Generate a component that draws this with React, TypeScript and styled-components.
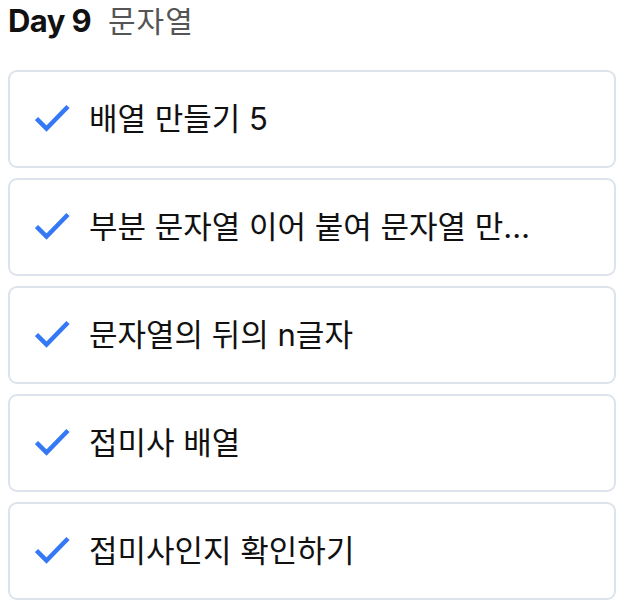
import React from "react";
import styled, { createGlobalStyle } from "styled-components";

const Global = createGlobalStyle`
  body {
    margin: 8px;
    background: #ffffff;
    font-family: Inter, "Noto Sans CJK KR", sans-serif;
    color: #111111;
  }
`;

const Page = styled.div`
  display: flex;
  flex-direction: column;
  width: 608px;
`;

const Header = styled.h1`
  margin: -7px 0 31px 0;
  display: flex;
  align-items: baseline;
  gap: 17px;
  font-size: 31px;
  line-height: 36px;
  font-weight: 400;
`;

const Day = styled.span`
  font-family: Inter, sans-serif;
  font-weight: 700;
  color: #111111;
  letter-spacing: -0.6px;
`;

const Topic = styled.span`
  color: #555555;
  font-family: "Noto Sans CJK KR", sans-serif;
  font-size: 30px;
  letter-spacing: 1px;
`;

const List = styled.ul`
  list-style: none;
  margin: 0;
  padding: 0;
  display: flex;
  flex-direction: column;
  gap: 10px;
`;

const Card = styled.li`
  box-sizing: border-box;
  height: 98px;
  border: 2px solid #dce3eb;
  border-radius: 9px;
  display: flex;
  align-items: center;
  padding: 0 20px 0 25px;
  gap: 18px;
`;

const Check = styled.svg`
  flex: none;
  width: 36px;
  height: 30px;
`;

const Label = styled.span`
  font-family: Inter, "Noto Sans CJK KR", sans-serif;
  font-size: 31px;
  line-height: 46px;
  letter-spacing: 0;
  color: #111111;
  white-space: nowrap;
  overflow: hidden;
  text-overflow: ellipsis;
  max-width: 452px;
  padding-bottom: 1px;
`;

const items = [
  "배열 만들기 5",
  "부분 문자열 이어 붙여 문자열 만들기",
  "문자열의 뒤의 n글자",
  "접미사 배열",
  "접미사인지 확인하기",
];

const CheckIcon = () => (
  <Check viewBox="0 0 36 30">
    <polyline
      points="1.5,14.5 11.5,24.5 33,2.5"
      fill="none"
      stroke="#3478f6"
      strokeWidth="4.5"
      strokeLinecap="butt"
      strokeLinejoin="miter"
    />
  </Check>
);

export default function App() {
  return (
    <>
      <Global />
      <Page>
        <Header>
          <Day>Day 9</Day>
          <Topic>문자열</Topic>
        </Header>
        <List>
          {items.map((t) => (
            <Card key={t}>
              <CheckIcon />
              <Label>{t}</Label>
            </Card>
          ))}
        </List>
      </Page>
    </>
  );
}
